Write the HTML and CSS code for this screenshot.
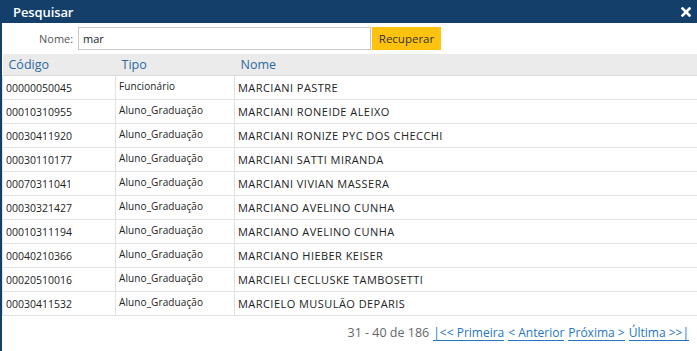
FILE: index.html
```html
<!DOCTYPE html>
<html lang="pt">
<head>
<meta charset="utf-8">
<link rel="stylesheet" href="styles.css">
</head>
<body>
<div class="win">
  <div class="titlebar">
    <span class="title">Pesquisar</span>
    <svg class="close" width="10" height="10" viewBox="0 0 10 10"><path d="M1.5 1.5 L8.5 8.5 M8.5 1.5 L1.5 8.5" stroke="#fff" stroke-width="2.6" stroke-linecap="square"/></svg>
  </div>
  <div class="form">
    <label class="lbl">Nome:</label>
    <input class="inp" type="text" value="mar">
    <button class="btn">Recuperar</button>
  </div>
  <table class="grid">
    <thead>
      <tr><th class="c1">Código</th><th class="c2">Tipo</th><th class="c3">Nome</th></tr>
    </thead>
    <tbody>
      <tr><td>00000050045</td><td class="tipo">Funcionário</td><td class="nome">MARCIANI PASTRE</td></tr>
      <tr><td>00010310955</td><td class="tipo">Aluno_Graduação</td><td class="nome">MARCIANI RONEIDE ALEIXO</td></tr>
      <tr><td>00030411920</td><td class="tipo">Aluno_Graduação</td><td class="nome">MARCIANI RONIZE PYC DOS CHECCHI</td></tr>
      <tr><td>00030110177</td><td class="tipo">Aluno_Graduação</td><td class="nome">MARCIANI SATTI MIRANDA</td></tr>
      <tr><td>00070311041</td><td class="tipo">Aluno_Graduação</td><td class="nome">MARCIANI VIVIAN MASSERA</td></tr>
      <tr><td>00030321427</td><td class="tipo">Aluno_Graduação</td><td class="nome">MARCIANO AVELINO CUNHA</td></tr>
      <tr><td>00010311194</td><td class="tipo">Aluno_Graduação</td><td class="nome">MARCIANO AVELINO CUNHA</td></tr>
      <tr><td>00040210366</td><td class="tipo">Aluno_Graduação</td><td class="nome">MARCIANO HIEBER KEISER</td></tr>
      <tr><td>00020510016</td><td class="tipo">Aluno_Graduação</td><td class="nome">MARCIELI CECLUSKE TAMBOSETTI</td></tr>
      <tr><td>00030411532</td><td class="tipo">Aluno_Graduação</td><td class="nome">MARCIELO MUSULÃO DEPARIS</td></tr>
    </tbody>
  </table>
  <div class="pager">
    <span class="count">31 - 40 de 186</span>
    <a class="lnk" href="#">|&lt;&lt; Primeira</a>
    <a class="lnk" href="#">&lt; Anterior</a>
    <a class="lnk" href="#">Próxima &gt;</a>
    <a class="lnk" href="#">Última &gt;&gt;|</a>
  </div>
</div>
</body>
</html>
```

FILE: styles.css
```css
html, body {
  margin: 0;
  padding: 0;
  background: #fff;
  font-family: "Open Sans", "Noto Sans", sans-serif;
}
.win {
  width: 697px;
  height: 351px;
  box-sizing: border-box;
  border-left: 2px solid #143f6a;
  overflow: hidden;
}
.titlebar {
  height: 23px;
  background: #143f6a;
  margin-left: -2px;
  padding: 0 6px 0 13px;
  display: flex;
  align-items: center;
  justify-content: space-between;
}
.title {
  color: #fff;
  font-size: 13px;
  font-weight: 600;
  letter-spacing: -0.1px;
}
.close {
  display: block;
}
.form {
  display: flex;
  align-items: center;
  height: 22px;
  margin-top: 4px;
  padding-left: 37px;
}
.lbl {
  font-size: 11px;
  color: #555;
  width: 34px;
  margin-right: 5px;
}
.inp {
  box-sizing: border-box;
  width: 293px;
  height: 23px;
  border: 1px solid #c8c8c8;
  padding: 0 4px;
  font-family: inherit;
  font-size: 11px;
  color: #222;
  outline: none;
}
.btn {
  box-sizing: border-box;
  height: 23px;
  width: 69px;
  margin-left: 1px;
  border: none;
  background: #ffc20e;
  color: #333;
  font-family: inherit;
  font-size: 11.5px;
  padding: 0;
}
.grid {
  margin-top: 5px;
  width: 695px;
  border-collapse: collapse;
  table-layout: fixed;
}
.grid th {
  background: #ebebeb;
  color: #2c6aa0;
  font-weight: normal;
  font-size: 12.5px;
  text-align: left;
  height: 21px;
  padding: 0 0 0 6px;
  border-bottom: 1px solid #dcdcdc;
}
.grid .c1 { width: 107px; }
.grid .c2 { width: 113px; }
.grid td {
  font-size: 10.5px;
  color: #222;
  height: 23px;
  padding: 0 0 0 3px;
  border: 1px solid #e2e2e2;
  border-top: none;
  white-space: nowrap;
  overflow: hidden;
}
.grid td:last-child {
  border-right: none;
}
.grid td.nome {
  font-size: 11px;
  letter-spacing: 0.45px;
}
.grid td.tipo {
  font-size: 10px;
  letter-spacing: 0.1px;
  vertical-align: top;
  padding-top: 3px;
  box-sizing: border-box;
}
.pager {
  display: flex;
  justify-content: flex-end;
  align-items: center;
  gap: 4px;
  padding-right: 8px;
  margin-top: 8px;
  font-size: 12px;
}
.count {
  color: #666;
  font-size: 12.5px;
}
.lnk {
  color: #2476c4;
  text-decoration: none;
  border-bottom: 1px solid #2476c4;
  line-height: 15px;
}
```
